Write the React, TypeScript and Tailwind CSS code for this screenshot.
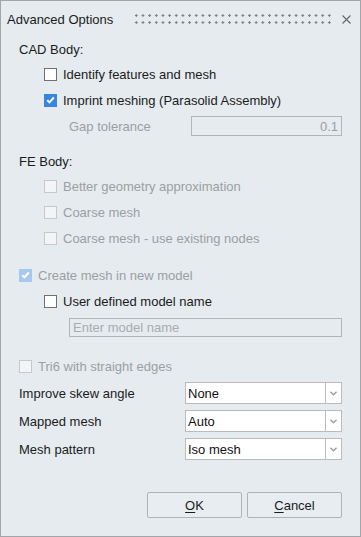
import React from "react";

type BoxState = "off" | "on" | "disabled" | "disabledOn";

function Check({ state }: { state: BoxState }) {
  const base = "w-[13px] h-[13px] shrink-0 flex items-center justify-center border";
  if (state === "on" || state === "disabledOn") {
    const c = state === "on" ? "bg-[#3685e2] border-[#3685e2]" : "bg-[#a6c9f0] border-[#a6c9f0]";
    return (
      <span className={`${base} ${c}`}>
        <svg width="9" height="8" viewBox="0 0 9 8">
          <path d="M1.2 4.2 L3.5 6.3 L7.8 1.5" fill="none" stroke="white" strokeWidth="2" />
        </svg>
      </span>
    );
  }
  if (state === "disabled") return <span className={`${base} border-[#c6c9cc] bg-[#f3f4f5]`} />;
  return <span className={`${base} border-[#6f6f6f] bg-white`} />;
}

function CheckRow({ label, state, indent }: { label: string; state: BoxState; indent: string }) {
  const muted = state === "disabled" || state === "disabledOn";
  return (
    <div className={`h-[26px] flex items-center gap-[6px] ${indent}`}>
      <Check state={state} />
      <span className={muted ? "text-[#9c9fa2]" : "text-[#1b1b1b]"}>{label}</span>
    </div>
  );
}

function Select({ label, value }: { label: string; value: string }) {
  return (
    <div className="h-[28px] flex items-center pl-[18px] pr-[18px]">
      <span className="w-[166px] text-[#1b1b1b]">{label}</span>
      <div className="flex h-[22px] flex-1">
        <div className="flex-1 border border-[#b9bcbf] bg-white flex items-center pl-[2px] text-[#111]">{value}</div>
        <div className="w-[16px] border-y border-r border-[#b9bcbf] bg-white flex items-center justify-center">
          <svg width="7" height="5" viewBox="0 0 7 5">
            <path d="M0.5 0.8 L3.5 3.8 L6.5 0.8" fill="none" stroke="#9a9da0" strokeWidth="1.4" />
          </svg>
        </div>
      </div>
    </div>
  );
}

export default function App() {
  return (
    <div
      className="w-[361px] h-[537px] border border-[#a2a6aa] bg-[#e5ebef] flex flex-col text-[13px] leading-none"
      style={{ fontFamily: '"Liberation Sans", Arial, sans-serif' }}
    >
      {/* Title bar */}
      <div className="h-[36px] flex items-center pl-[6px] pr-[9px]">
        <span className="text-[#1b1b1b] w-[126px]">Advanced Options</span>
        <div className="flex-1 h-[14px] mr-[8px] bg-[radial-gradient(circle,#808386_1.1px,transparent_1.4px)] bg-[length:6.67px_7px]" />
        <svg width="9" height="9" viewBox="0 0 9 9">
          <path d="M0.5 0.5 L8.5 8.5 M8.5 0.5 L0.5 8.5" stroke="#666" strokeWidth="1.1" />
        </svg>
      </div>

      {/* CAD Body */}
      <div className="h-[24px] flex items-center pl-[18px] text-[#1b1b1b]">CAD Body:</div>
      <CheckRow label="Identify features and mesh" state="off" indent="pl-[43px]" />
      <CheckRow label="Imprint meshing (Parasolid Assembly)" state="on" indent="pl-[43px]" />
      <div className="h-[26px] flex items-center pl-[68px] pr-[18px]">
        <span className="w-[122px] text-[#9c9fa2]">Gap tolerance</span>
        <div className="flex-1 h-[20px] border border-[#b3b6b9] flex items-center justify-end pr-[3px] text-[#9c9fa2]">
          0.1
        </div>
      </div>

      {/* FE Body */}
      <div className="h-[24px] mt-[10px] flex items-center pl-[18px] text-[#1b1b1b]">FE Body:</div>
      <CheckRow label="Better geometry approximation" state="disabled" indent="pl-[43px]" />
      <CheckRow label="Coarse mesh" state="disabled" indent="pl-[43px]" />
      <CheckRow label="Coarse mesh - use existing nodes" state="disabled" indent="pl-[43px]" />

      {/* New model */}
      <div className="mt-[11px]">
        <CheckRow label="Create mesh in new model" state="disabledOn" indent="pl-[18px]" />
      </div>
      <CheckRow label="User defined model name" state="off" indent="pl-[43px]" />
      <div className="h-[26px] flex items-center pl-[68px] pr-[18px]">
        <div className="flex-1 h-[19px] border border-[#b3b6b9] flex items-center pl-[3px] text-[#a9acaf]">
          Enter model name
        </div>
      </div>

      <div className="mt-[13px]">
        <CheckRow label="Tri6 with straight edges" state="disabled" indent="pl-[18px]" />
      </div>

      <Select label="Improve skew angle" value="None" />
      <Select label="Mapped mesh" value="Auto" />
      <Select label="Mesh pattern" value="Iso mesh" />

      {/* Buttons */}
      <div className="mt-[29px] flex justify-end gap-[5px] pr-[18px]">
        <button className="w-[95px] h-[26px] border border-[#afb3b7] rounded-[2px] bg-[#e8edf1] text-[#1b1b1b]">
          <span className="underline underline-offset-2">O</span>K
        </button>
        <button className="w-[95px] h-[26px] border border-[#afb3b7] rounded-[2px] bg-[#e8edf1] text-[#1b1b1b]">
          <span className="underline underline-offset-2">C</span>ancel
        </button>
      </div>
    </div>
  );
}
